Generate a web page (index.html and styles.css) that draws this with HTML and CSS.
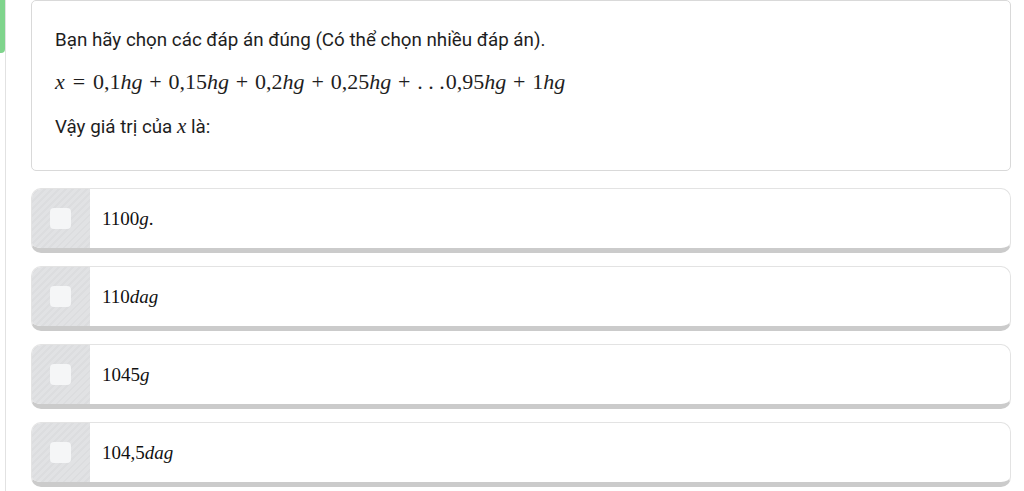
FILE: index.html
```html
<!DOCTYPE html>
<html lang="vi">
<head>
<meta charset="utf-8">
<link rel="stylesheet" href="styles.css">
</head>
<body>
<div class="page">
  <div class="tab"></div>
  <div class="content">
    <div class="question">
      <p class="q-line">Bạn hãy chọn các đáp án đúng (Có thể chọn nhiều đáp án).</p>
      <p class="math-line"><span class="mi">x</span><span class="rel">=</span>0,1<span class="mi">hg</span><span class="bin">+</span>0,15<span class="mi">hg</span><span class="bin">+</span>0,2<span class="mi">hg</span><span class="bin">+</span>0,25<span class="mi">hg</span><span class="bin">+</span><span class="dots">. . .</span>0,95<span class="mi">hg</span><span class="bin">+</span>1<span class="mi">hg</span></p>
      <p class="q-line">Vậy giá trị của <span class="mi inline">x</span> là:</p>
    </div>
    <div class="options">
      <div class="option">
        <div class="opt-check"><span class="box"></span></div>
        <div class="opt-text">1100<span class="mi">g</span>.</div>
      </div>
      <div class="option">
        <div class="opt-check"><span class="box"></span></div>
        <div class="opt-text">110<span class="mi">dag</span></div>
      </div>
      <div class="option">
        <div class="opt-check"><span class="box"></span></div>
        <div class="opt-text">1045<span class="mi">g</span></div>
      </div>
      <div class="option">
        <div class="opt-check"><span class="box"></span></div>
        <div class="opt-text">104,5<span class="mi">dag</span></div>
      </div>
    </div>
  </div>
</div>
</body>
</html>
```

FILE: styles.css
```css
* { box-sizing: border-box; }
html, body { margin: 0; padding: 0; background: #ffffff; }
body { font-family: Roboto, "Liberation Sans", Arial, sans-serif; color: #1e1e1e; }

.page {
  display: flex;
  flex-direction: column;
  width: 1024px;
  height: 491px;
  overflow: hidden;
}
.tab {
  position: absolute;
  left: 0;
  top: 0;
  width: 5px;
  height: 53px;
  background: #7fd48c;
  border-bottom-right-radius: 4px;
}
.content {
  margin-left: 5px;
  border-left: 1px solid #e2e2e2;
  padding: 0 13px 0 25px;
  height: 491px;
}
.question {
  border: 1px solid #d9d9d9;
  border-radius: 5px;
  height: 171px;
  padding: 17px 23px 0 23px;
}
.q-line {
  margin: 0;
  font-size: 18.8px;
  line-height: 24px;
  height: 42px;
  padding-top: 10px;
  white-space: nowrap;
}
.math-line {
  margin: 0;
  height: 44px;
  padding-top: 10px;
  font-family: "Liberation Serif", "Times New Roman", serif;
  font-size: 22px;
  line-height: 24px;
  white-space: nowrap;
}
.mi { font-style: italic; }
.q-line .mi.inline { font-family: "Liberation Serif", serif; font-size: 21px; }
.rel { margin: 0 0.36em; }
.bin { margin: 0 0.31em; }
.dots { margin-right: 1px; }

.options {
  display: flex;
  flex-direction: column;
  gap: 13px;
  padding-top: 17px;
}
.option {
  display: flex;
  height: 65px;
  border: 1px solid #e3e3e3;
  border-bottom: 5px solid #cbcbcb;
  border-radius: 10px;
  overflow: hidden;
  background: #ffffff;
}
.opt-check {
  width: 58px;
  flex: none;
  display: flex;
  align-items: center;
  justify-content: center;
  background: repeating-linear-gradient(135deg, #e1e2e4 0 3px, #dcdddf 3px 5px);
  box-shadow: 0 5px 0 #a3a3a3;
}
.box {
  display: block;
  width: 21px;
  height: 21px;
  border-radius: 4px;
  background: #f5f6f7;
  margin-left: -1px;
}
.opt-text {
  display: flex;
  align-items: center;
  padding-left: 12px;
  font-family: "Liberation Serif", "Times New Roman", serif;
  font-size: 19px;
  color: #111;
}
```
